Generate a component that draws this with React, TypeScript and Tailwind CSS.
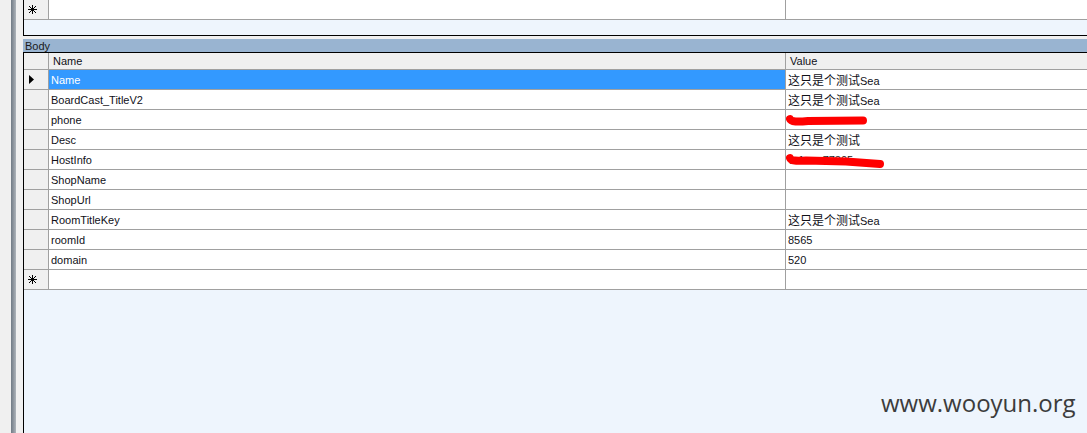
const rows: [string, string | null][] = [
  ["Name", "这只是个测试Sea"],
  ["BoardCast_TitleV2", "这只是个测试Sea"],
  ["phone", "phone"],
  ["Desc", "这只是个测试"],
  ["HostInfo", "host"],
  ["ShopName", ""],
  ["ShopUrl", ""],
  ["RoomTitleKey", "这只是个测试Sea"],
  ["roomId", "8565"],
  ["domain", "520"],
];

function Star() {
  return (
    <svg width="9" height="9" viewBox="0 0 9 9" className="ml-[4px]">
      <g stroke="#000" strokeWidth="1" shapeRendering="crispEdges">
        <line x1="4.5" y1="0" x2="4.5" y2="9" />
        <line x1="0" y1="4.5" x2="9" y2="4.5" />
        <line x1="1" y1="1" x2="8" y2="8" />
        <line x1="8" y1="1" x2="1" y2="8" />
      </g>
    </svg>
  );
}

function Arrow() {
  return (
    <svg width="6" height="9" viewBox="0 0 6 9" className="ml-[5px]">
      <path d="M0 0 L5 4.5 L0 9 Z" fill="#000" />
    </svg>
  );
}

function ValueText({ v }: { v: string }) {
  if (v === "phone") {
    return (
      <div className="relative w-full h-full">
        <svg width="110" height="19" className="absolute left-0 top-0">
          <path d="M4 8 C5 11 12 11 22 10 L77 9.5" stroke="#ff0000" strokeWidth="8" strokeLinecap="round" fill="none" />
        </svg>
      </div>
    );
  }
  if (v === "host") {
    return (
      <div className="relative w-full h-full flex items-center pt-[1px]">
        <span className="pl-[3px] text-[11px] text-[#222]">1 1&nbsp;&nbsp;&nbsp;&nbsp;&nbsp;&nbsp;77805</span>
        <svg width="110" height="20" className="absolute left-0 top-0">
          <path d="M4 7 C5 10 10 10 20 9.5 L60 10.5 L94 13" stroke="#ff0000" strokeWidth="8" strokeLinecap="round" fill="none" />
        </svg>
      </div>
    );
  }
  const m = v.match(/^([\u4e00-\u9fff]+)(.*)$/);
  if (m) {
    return (
      <span className="pl-[2px] whitespace-nowrap">
        <span className="text-[12px] font-['Noto_Sans_CJK_SC',sans-serif]">{m[1]}</span>
        <span className="text-[11px]">{m[2]}</span>
      </span>
    );
  }
  return <span className="pl-[2px] text-[11px]">{v}</span>;
}

export default function App() {
  return (
    <div className="relative w-[1087px] h-[433px] overflow-hidden flex bg-[#f0f0f0] text-[11px] text-[#101018] font-['Liberation_Sans','Noto_Sans_CJK_SC',sans-serif]">
      <div className="w-[11px] shrink-0"></div>
      <div className="w-[5px] shrink-0 bg-gradient-to-r from-[#707a85] to-[#aeb4ba]"></div>
      <div className="w-[7px] shrink-0"></div>
      <div className="flex-1 min-w-0 flex flex-col">
        {/* upper grid */}
        <div className="h-[36px] shrink-0 border-l border-b border-black bg-[#eef5fd]">
          <div className="h-[20px] flex border-b border-[#a0a0a0] bg-white">
            <div className="w-[25px] shrink-0 flex items-center bg-[#f0f0f0] border-r border-[#a0a0a0]">
              <Star />
            </div>
            <div className="w-[737px] shrink-0 border-r border-[#a0a0a0]"></div>
            <div className="flex-1"></div>
          </div>
        </div>
        <div className="h-[3px] shrink-0"></div>
        <div className="h-[13px] shrink-0 bg-[#99b4d1] flex items-center pl-[2px] pt-[1px] leading-none text-[#1a1a1a]">Body</div>
        {/* body grid */}
        <div className="flex-1 border-l border-t border-black bg-[#eef5fd]">
          <div className="h-[17px] flex border-b border-[#a0a0a0] bg-[#f0f0f0]">
            <div className="w-[25px] shrink-0 border-r border-[#a0a0a0]"></div>
            <div className="w-[737px] shrink-0 border-r border-[#a0a0a0] flex items-center pl-[4px] pt-[1px]">Name</div>
            <div className="flex-1 flex items-center pl-[4px] pt-[1px]">Value</div>
          </div>
          {rows.map(([name, value], i) => (
            <div key={name} className="h-[20px] flex border-b border-[#a0a0a0] bg-white">
              <div className="w-[25px] shrink-0 flex items-center bg-[#f0f0f0] border-r border-[#a0a0a0]">
                {i === 0 && <Arrow />}
              </div>
              <div
                className={
                  i === 0
                    ? "w-[737px] shrink-0 border-r border-[#a0a0a0] flex items-center pl-[2px] pt-[1px] bg-[#3399ff] text-white"
                    : "w-[737px] shrink-0 border-r border-[#a0a0a0] flex items-center pl-[2px] pt-[1px]"
                }
              >
                {name}
              </div>
              <div className="flex-1 flex items-center pt-[1px]">{value ? <ValueText v={value} /> : null}</div>
            </div>
          ))}
          <div className="h-[20px] flex border-b border-[#a0a0a0] bg-white">
            <div className="w-[25px] shrink-0 flex items-center bg-[#f0f0f0] border-r border-[#a0a0a0]">
              <Star />
            </div>
            <div className="w-[737px] shrink-0 border-r border-[#a0a0a0]"></div>
            <div className="flex-1"></div>
          </div>
        </div>
      </div>
      <div className="absolute left-[881px] top-[391px] text-[24px] leading-[24px] text-[#3c3c3c] font-['Open_Sans',sans-serif]">
        www.wooyun.org
      </div>
    </div>
  );
}
